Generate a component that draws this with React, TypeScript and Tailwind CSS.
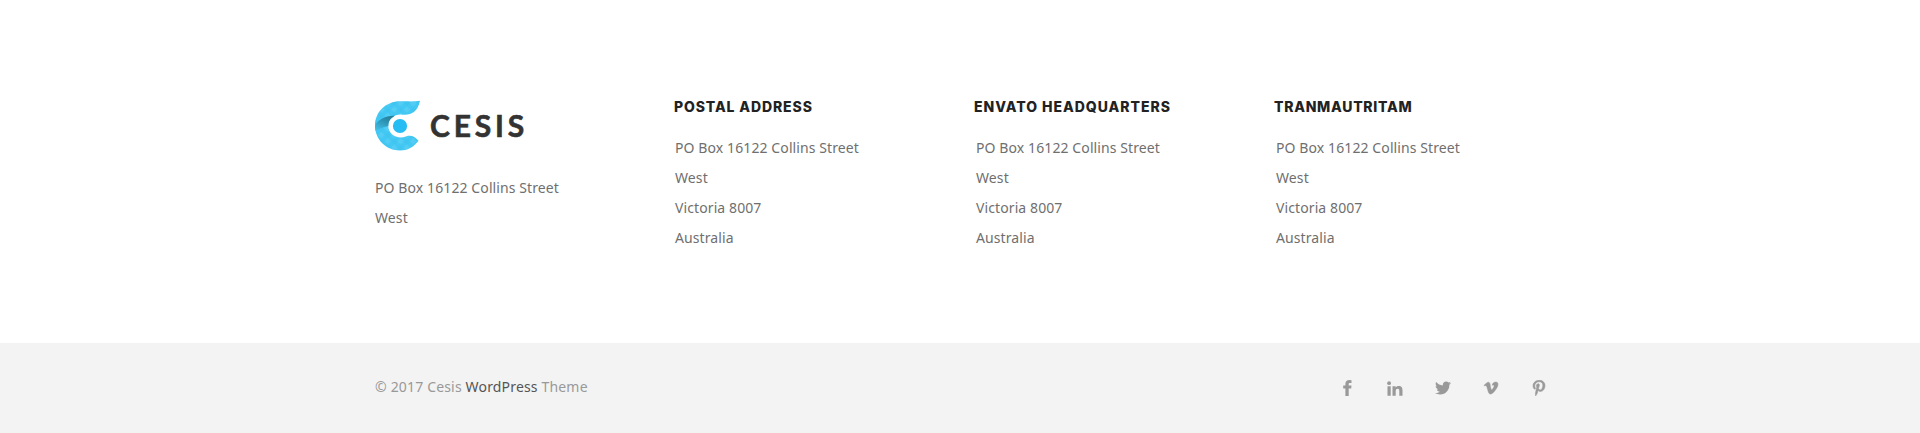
import type { ReactNode } from 'react';
import { FaTwitter, FaVimeoV, FaPinterestP } from 'react-icons/fa';

const address = ['PO Box 16122 Collins Street', 'West', 'Victoria 8007', 'Australia'];

function LogoMark() {
  return (
    <svg width="46" height="51" viewBox="0 0 46 51" className="shrink-0">
      <defs>
        <linearGradient id="shade" x1="0.8" y1="0" x2="0.2" y2="1">
          <stop offset="0" stopColor="#237f9b" />
          <stop offset="0.35" stopColor="#2b8fae" />
          <stop offset="1" stopColor="#40bfe8" />
        </linearGradient>
        <pattern id="weave" width="9" height="9" patternUnits="userSpaceOnUse" patternTransform="rotate(45)">
          <rect width="4.5" height="4.5" fill="#fff" opacity="0.09" />
          <rect x="4.5" y="4.5" width="4.5" height="4.5" fill="#1da1d8" opacity="0.08" />
        </pattern>
        <path
          id="mark"
          d="M45 0.8C40 1.7 34 1.3 25 1.3C11 1.3 0 12 0 25.5C0 39.5 11 50.5 25 50.5C32.500 50.500 38.500 47.500 43.500 40.800C40.500 36.500 35.500 34.800 31.500 36.200C22.500 40 13.300 34.500 13.300 26C13.300 19 19 14.300 26 14.500C36 15.500 42.500 12.500 45 0.800Z"
        />
      </defs>
      <use href="#mark" fill="#43c8f3" />
      <use href="#mark" fill="url(#weave)" />
      <path d="M0 26C2.500 20 10 15.500 20 15.800C15.500 18 13.300 21.500 13.300 26C7 27 3 30 0.600 31C0.200 29 0 28 0 26Z" fill="url(#shade)" />
      <circle cx="25" cy="26" r="7.100" fill="#25bdf3" />
    </svg>
  );
}

function FacebookIcon() {
  return (
    <svg width="9" height="16" viewBox="0 0 9 16" fill="currentColor">
      <path d="M8.500 0.200V2.900H7C6 2.900 5.700 3.400 5.700 4.200V5.600H8.500L8.200 8.400H5.700V16H2.400V8.400H0.200V5.600H2.400V3.800C2.400 1.400 3.900 0 6.300 0Z" />
    </svg>
  );
}

function LinkedinIcon() {
  return (
    <svg width="16" height="15" viewBox="0 0 16 15" fill="currentColor">
      <circle cx="2.100" cy="2.200" r="1.900" />
      <path d="M0.500 5.300H3.700V14.800H0.500ZM5.500 5.300H8.600V6.500C9.200 5.600 10.200 5 11.700 5C14.700 5 15.500 7 15.500 9.600V14.800H12.300V10.200C12.300 8.900 12.200 7.700 10.700 7.700C9.100 7.700 8.700 8.800 8.700 10.200V14.800H5.500Z" />
    </svg>
  );
}

function Social({ children }: { children: ReactNode }) {
  return <a className="flex w-12 justify-center">{children}</a>;
}

function Column({ title, spacing, inset }: { title: string; spacing: string; inset: string }) {
  return (
    <section className="w-[300px]">
      <h3 className={`font-['Inter'] text-[14px] leading-[14px] font-extrabold whitespace-nowrap text-[#222] ${spacing}`}>{title}</h3>
      <div className={`mt-[19px] ${inset}`}>
        {address.map((line) => (
          <p key={line}>{line}</p>
        ))}
      </div>
    </section>
  );
}

export default function App() {
  return (
    <footer className="flex h-[433px] flex-col bg-white font-['Noto_Sans',sans-serif] text-[14px] leading-[30px] tracking-[0.1px] text-[#6f6f6f]">
      <div className="flex h-[343px] pt-[100px] pl-[375px]">
        <section className="w-[299px]">
          <div className="flex items-center">
            <LogoMark />
            <span className="ml-[9px] font-['Lato'] text-[30px] leading-[51px] font-bold tracking-[3.8px] text-[#333] [-webkit-text-stroke:0.6px_#333]">CESIS</span>
          </div>
          <div className="mt-[22px]">
            <p>{address[0]}</p>
            <p>{address[1]}</p>
          </div>
        </section>
        <Column title="POSTAL ADDRESS" spacing="tracking-[0.88px]" inset="pl-px" />
        <Column title="ENVATO HEADQUARTERS" spacing="tracking-[0.96px]" inset="pl-[2px]" />
        <Column title="TRANMAUTRITAM" spacing="tracking-[0.72px]" inset="pl-[2px]" />
      </div>
      <div className="flex h-[90px] items-center justify-between bg-[#f3f3f3] pr-[357px] pl-[375px] text-[#999]">
        <p className="-mt-[2px] tracking-[0.17px]">
          © 2017 Cesis <a className="text-[#555]">WordPress</a> Theme
        </p>
        <div className="flex items-center text-[16px]">
          <Social><FacebookIcon /></Social>
          <Social><LinkedinIcon /></Social>
          <Social><FaTwitter /></Social>
          <Social><FaVimeoV stroke="currentColor" strokeWidth="14" /></Social>
          <Social><FaPinterestP stroke="currentColor" strokeWidth="18" /></Social>
        </div>
      </div>
    </footer>
  );
}
